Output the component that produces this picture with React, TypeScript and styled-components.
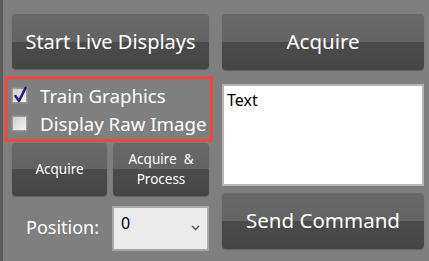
import React from "react";
import styled, { createGlobalStyle } from "styled-components";

const Global = createGlobalStyle`
  html, body { margin: 0; padding: 0; background: #7f7f7f; }
  body { font-family: "Noto Sans", "Open Sans", sans-serif; }
  * { box-sizing: border-box; }
`;

const Page = styled.div`
  width: 429px;
  height: 261px;
  background: #7f7f7f;
  border-left: 3px solid #5c5c5c;
  padding: 14px 5px 0 9px;
  display: grid;
  grid-template-columns: 197px 202px;
  column-gap: 13px;
  align-items: start;
`;

const Column = styled.div`
  display: flex;
  flex-direction: column;
`;

const Button = styled.button<{ $h: number; $size: number; $mt?: number }>`
  height: ${(p) => p.$h}px;
  margin-top: ${(p) => p.$mt ?? 0}px;
  width: 100%;
  border: none;
  border-radius: 4px;
  background: linear-gradient(to bottom, #686868 0%, #636363 50%, #4b4b4b 50%, #454545 100%);
  box-shadow: 0 1px 1px rgba(0, 0, 0, 0.25);
  color: #ffffff;
  font-family: "Noto Sans", "Open Sans", sans-serif;
  font-size: ${(p) => p.$size}px;
  line-height: 1.45;
  padding: 0;
  display: flex;
  align-items: center;
  justify-content: center;
  text-align: center;
  white-space: pre-wrap;
`;

const RedBox = styled.div`
  margin: 7px -4px 0 -7px;
  height: 66px;
  border: 3px solid #f24444;
  padding: 6px 0 0 4px;
  display: flex;
  flex-direction: column;
  gap: 7px;
`;

const CheckRow = styled.label`
  display: flex;
  align-items: center;
  gap: 13px;
  height: 21px;
  color: #ffffff;
  font-size: 18.7px;
  white-space: nowrap;
`;

const Box = styled.span`
  width: 15px;
  height: 15px;
  border: 1px solid #9a9a9a;
  background: linear-gradient(135deg, #cfcfcf 0%, #f4f4f4 100%);
  position: relative;
  flex: none;
  box-shadow: 0 0 0 1px #8a8a8a;
`;

const Check = styled.svg`
  position: absolute;
  left: -1px;
  top: -3px;
`;

const SmallRow = styled.div`
  display: grid;
  grid-template-columns: 95px 96px;
  column-gap: 6px;
  margin-top: 1px;
`;

const PositionRow = styled.div`
  display: flex;
  align-items: flex-start;
  margin-top: 10px;
  height: 45px;
`;

const Label = styled.span`
  width: 100px;
  padding-left: 14px;
  padding-top: 9px;
  color: #ffffff;
  font-size: 18px;
`;

const Select = styled.div`
  width: 97px;
  height: 45px;
  background: #ebebeb;
  border: 2px solid #a9a9a9;
  position: relative;
  color: #000;
  font-size: 16px;
  line-height: 1.2;
  padding: 6px 0 0 7px;
`;

const Chevron = styled.svg`
  position: absolute;
  right: 7px;
  top: 17px;
`;

const TextBox = styled.div`
  margin-top: 14px;
  height: 102px;
  background: #ffffff;
  border: 2px solid #b4b4b4;
  color: #000;
  font-size: 16px;
  line-height: 1.2;
  padding: 5px 0 0 3px;
`;

export default function App() {
  return (
    <>
      <Global />
      <Page>
        <Column>
          <Button $h={55} $size={20}>Start Live Displays</Button>
          <RedBox>
            <CheckRow>
              <Box>
                <Check width="17" height="18" viewBox="0 0 17 18">
                  <path d="M3.5 10 L7 15 L13.5 2" fill="none" stroke="#1f1f6e" strokeWidth="2.6" strokeLinecap="round" strokeLinejoin="round" />
                </Check>
              </Box>
              Train Graphics
            </CheckRow>
            <CheckRow>
              <Box />
              Display Raw Image
            </CheckRow>
          </RedBox>
          <SmallRow>
            <Button $h={53} $size={13.5}>Acquire</Button>
            <Button $h={53} $size={13.5}>{"Acquire  &\nProcess"}</Button>
          </SmallRow>
          <PositionRow>
            <Label>Position:</Label>
            <Select>
              0
              <Chevron width="9" height="6" viewBox="0 0 9 6">
                <path d="M1 1 L4.5 4.5 L8 1" fill="none" stroke="#555" strokeWidth="1.4" />
              </Chevron>
            </Select>
          </PositionRow>
        </Column>
        <Column>
          <Button $h={56} $size={20.5}>Acquire</Button>
          <TextBox>Text</TextBox>
          <Button $h={56} $size={20.5} $mt={7}>Send Command</Button>
        </Column>
      </Page>
    </>
  );
}
